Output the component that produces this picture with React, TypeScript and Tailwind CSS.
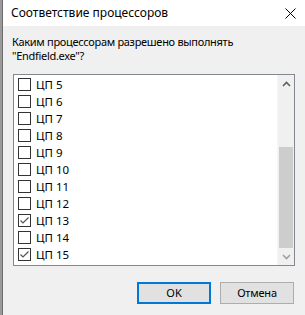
import React, { useState } from 'react';

const cpus = [5, 6, 7, 8, 9, 10, 11, 12, 13, 14, 15];

const CheckRow = ({ label, checked, onToggle }) => (
  <div className="flex items-center h-[17px] pl-[4px] cursor-default" onClick={onToggle}>
    <div className="w-[13px] h-[13px] border border-[#333333] bg-white flex items-center justify-center">
      {checked && (
        <svg width="11" height="11" viewBox="0 0 11 11">
          <path d="M1.5 5.5 L4 8 L9.5 2.5" fill="none" stroke="#555555" strokeWidth="1.2" />
        </svg>
      )}
    </div>
    <span className="ml-[5px] text-[11.5px] leading-none text-black">{label}</span>
  </div>
);

const App = () => {
  const [checked, setChecked] = useState(new Set([13, 15]));

  const toggle = (n) => {
    setChecked((prev) => {
      const next = new Set(prev);
      if (next.has(n)) next.delete(n);
      else next.add(n);
      return next;
    });
  };

  return (
    <div className="w-[305px] h-[315px] flex bg-[#f0f0f0] overflow-hidden" style={{ fontFamily: '"Noto Sans", "Liberation Sans", sans-serif' }}>
      {/* edge of the window behind */}
      <div className="w-[2px] bg-[#9a9a9a]" />
      <div className="w-[1px] bg-[#6d6d6d]" />

      <div className="flex-1 flex flex-col">
        <div className="h-[26px] bg-white flex items-center justify-between pl-[8px] pr-[9px]">
          <span className="text-[12px] text-black">Соответствие процессоров</span>
          <svg width="11" height="11" viewBox="0 0 11 11">
            <path d="M0.5 0.5 L10.5 10.5 M10.5 0.5 L0.5 10.5" stroke="#000" strokeWidth="1" />
          </svg>
        </div>

        <div className="flex-1 flex flex-col px-[10px]">
          <div className="mt-[9px] ml-[-1px] text-[11px] leading-[14px] tracking-[-0.3px] text-black">
            <div>Каким процессорам разрешено выполнять</div>
            <div>"Endfield.exe"?</div>
          </div>

          <div className="mt-[11px] h-[192px] border border-[#828790] bg-white flex">
            <div className="flex-1 pt-[1px]">
              {cpus.map((n) => (
                <CheckRow key={n} label={`ЦП ${n}`} checked={checked.has(n)} onToggle={() => toggle(n)} />
              ))}
            </div>
            <div className="w-[17px] bg-[#f0f0f0] border-l border-[#f7f7f7] flex flex-col">
              <div className="h-[17px] flex items-center justify-center">
                <svg width="9" height="6" viewBox="0 0 9 6">
                  <path d="M1 5 L4.5 1.5 L8 5" fill="none" stroke="#606060" strokeWidth="1.6" />
                </svg>
              </div>
              <div className="h-[55px]" />
              <div className="h-[101px] mx-[1px] bg-[#cdcdcd]" />
              <div className="flex-1" />
              <div className="h-[17px] flex items-center justify-center">
                <svg width="9" height="6" viewBox="0 0 9 6">
                  <path d="M1 1 L4.5 4.5 L8 1" fill="none" stroke="#a0a0a0" strokeWidth="1.6" />
                </svg>
              </div>
            </div>
          </div>

          <div className="mt-[16px] flex justify-end gap-[9px] pr-[1px]">
            <button className="w-[74px] h-[22px] bg-[#e1e1e1] border-2 border-[#0078d7] text-[11px] text-black flex items-center justify-center">
              OK
            </button>
            <button className="w-[74px] h-[22px] bg-[#e1e1e1] border border-[#adadad] text-[11px] tracking-[-0.2px] text-black flex items-center justify-center">
              Отмена
            </button>
          </div>
        </div>
      </div>
    </div>
  );
};

export default App;
